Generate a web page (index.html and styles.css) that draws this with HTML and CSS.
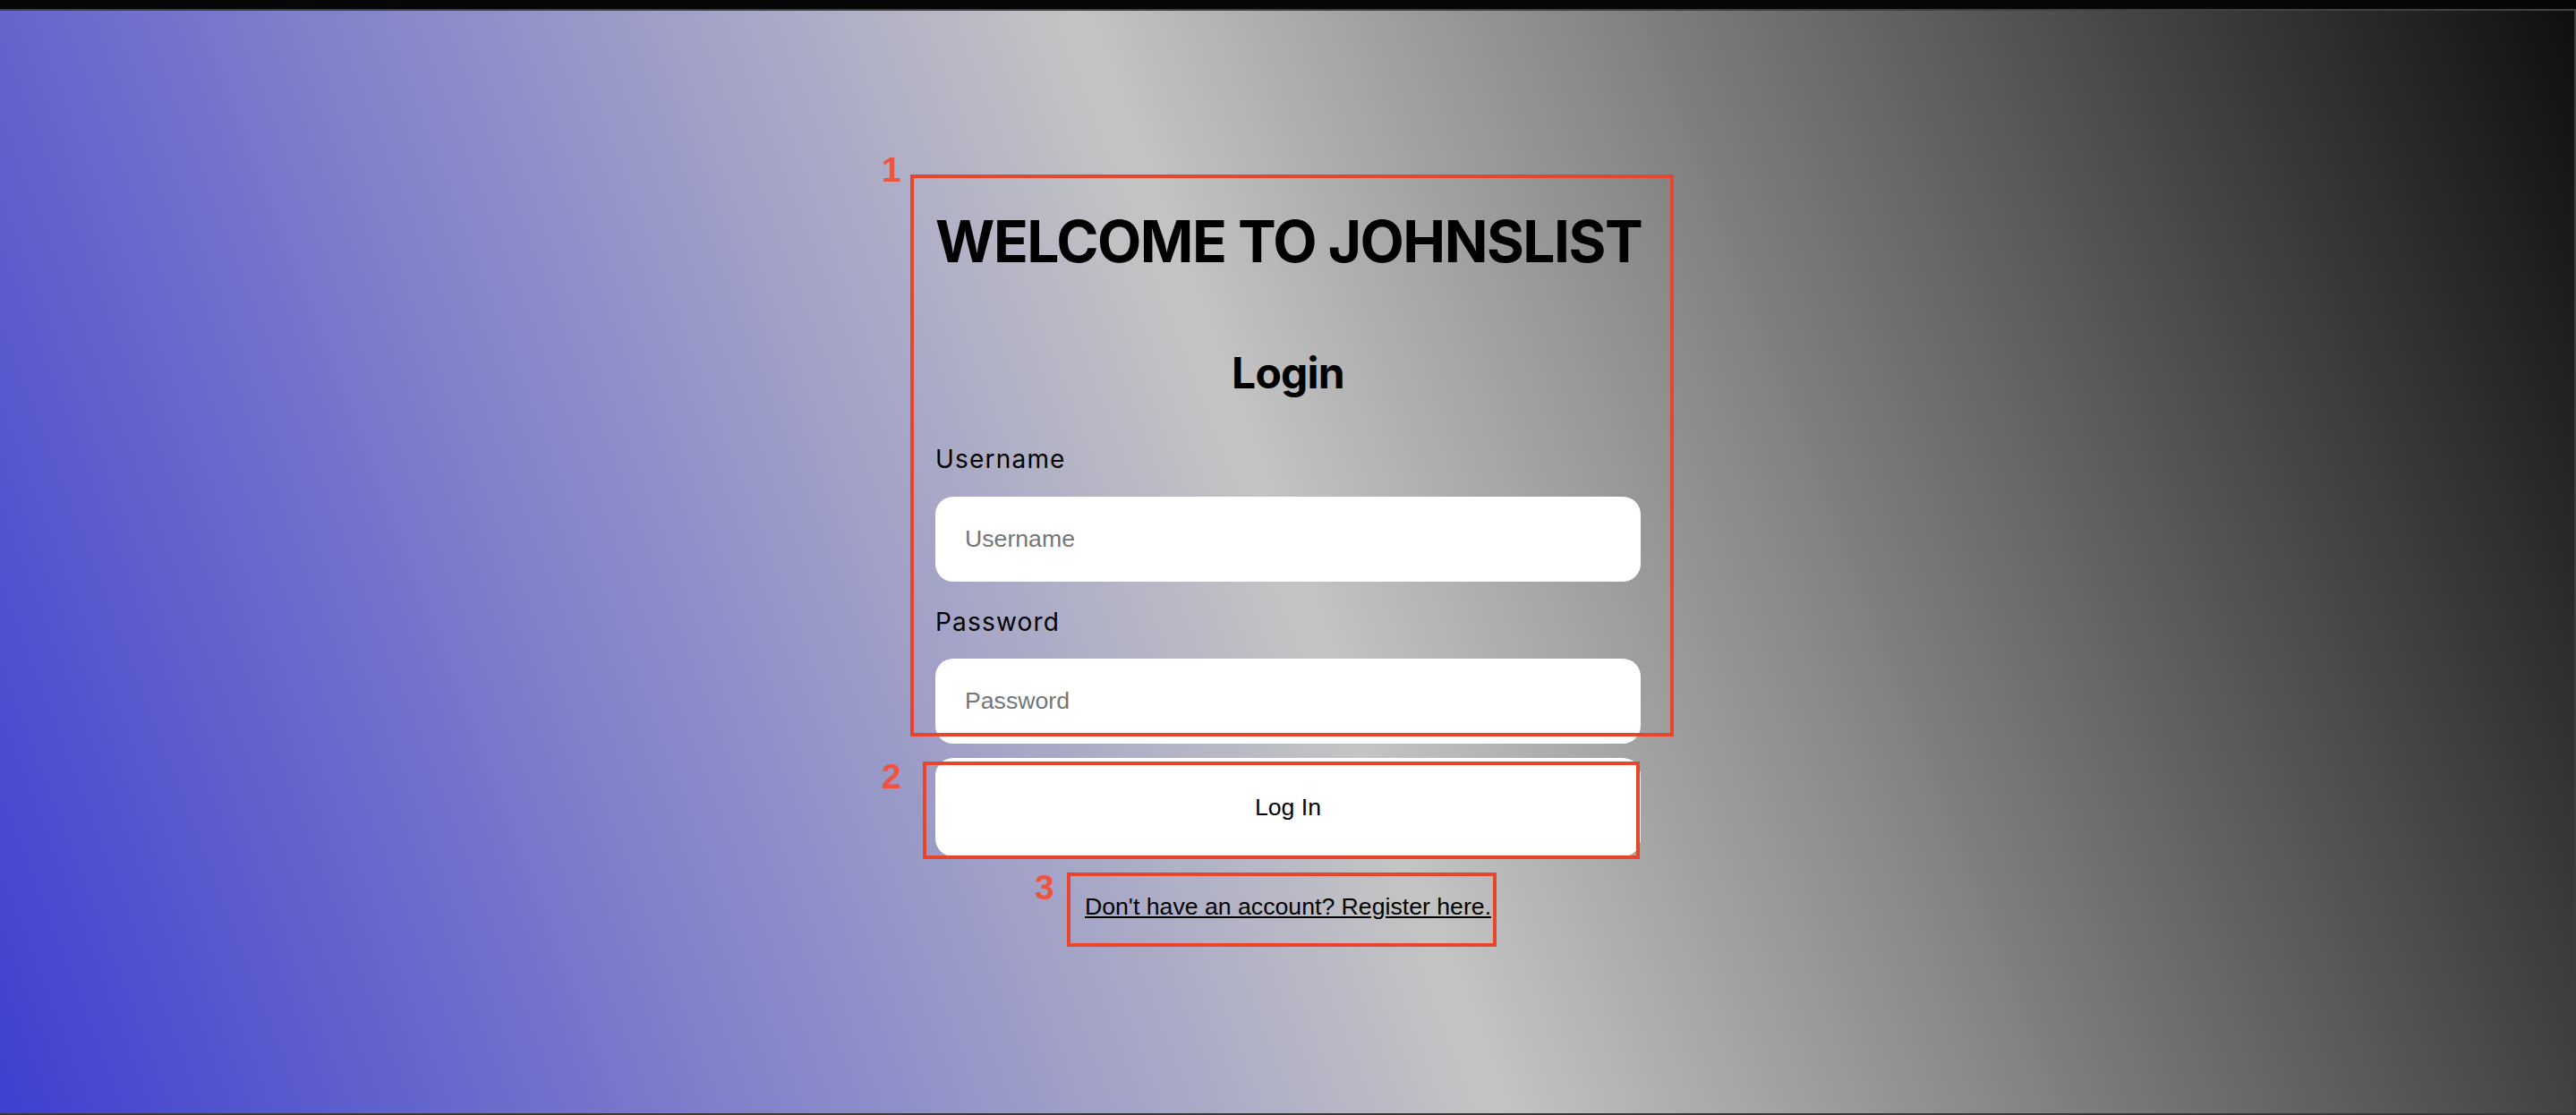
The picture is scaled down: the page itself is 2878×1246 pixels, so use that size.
FILE: index.html
```html
<!DOCTYPE html>
<html lang="en">
<head>
<meta charset="utf-8">
<title>Johnslist - Login</title>
<link rel="stylesheet" href="styles.css">
</head>
<body>
  <div class="topbar"></div>
  <main class="viewport">
    <section class="login">
      <h1 class="title">WELCOME TO JOHNSLIST</h1>
      <h2 class="subtitle">Login</h2>
      <form class="form">
        <label class="label" for="username">Username</label>
        <input class="field" id="username" type="text" placeholder="Username">
        <label class="label label-pw" for="password">Password</label>
        <input class="field" id="password" type="password" placeholder="Password">
        <button class="btn" type="button">Log In</button>
      </form>
      <a class="register" href="#">Don't have an account? Register here.</a>
    </section>
  </main>
  <div class="mark box1"></div>
  <div class="mark box2"></div>
  <div class="mark box3"></div>
  <span class="num num1">1</span>
  <span class="num num2">2</span>
  <span class="num num3">3</span>
</body>
</html>
```

FILE: styles.css
```css
html, body {
  margin: 0;
  padding: 0;
}
body {
  width: 2878px;
  height: 1246px;
  display: flex;
  flex-direction: column;
  background: #070707;
  overflow: hidden;
  position: relative;
}
.topbar {
  height: 10px;
  background: #070707;
  border-bottom: 2px solid #404040;
  flex: none;
}
.viewport {
  flex: 1;
  border-right: 2px solid #3e3e3e;
  border-bottom: 2px solid #3a3a3a;
  background: linear-gradient(69deg, #3f3fd1 0%, #c4c4c4 50%, #0f0f0f 100%);
  display: flex;
  justify-content: center;
}
.login {
  width: 788px;
  display: flex;
  flex-direction: column;
  margin-left: 2px;
}
.title {
  font-family: Inter, "Liberation Sans", sans-serif;
  font-weight: 700;
  font-size: 64px;
  line-height: 78px;
  letter-spacing: -1.5px;
  margin: 219px 0 0;
  color: #000;
  text-align: center;
  white-space: nowrap;
}
.subtitle {
  font-family: Inter, "Liberation Sans", sans-serif;
  font-weight: 700;
  font-size: 48px;
  line-height: 58px;
  letter-spacing: -0.8px;
  margin: 79px 0 0;
  color: #000;
  text-align: center;
}
.form {
  display: flex;
  flex-direction: column;
  margin: 0;
}
.label {
  font-family: Inter, "Liberation Sans", sans-serif;
  font-size: 28px;
  line-height: 34px;
  letter-spacing: 1.2px;
  color: #000;
  margin: 50px 0 25px;
}
.label-pw {
  margin: 28px 0 24px;
}
.field {
  height: 95px;
  box-sizing: border-box;
  border: none;
  border-radius: 20px;
  background: #fff;
  padding: 0 33px;
  font-family: "Liberation Sans", Arial, sans-serif;
  font-size: 26.67px;
  color: #000;
  outline: none;
}
.field::placeholder {
  color: #757575;
}
.btn {
  margin-top: 16px;
  height: 110px;
  border: none;
  border-radius: 20px;
  background: #fff;
  font-family: "Liberation Sans", Arial, sans-serif;
  font-size: 26.67px;
  color: #000;
  cursor: pointer;
}
.register {
  align-self: center;
  margin-top: 41px;
  font-family: "Liberation Sans", Arial, sans-serif;
  font-size: 26.67px;
  line-height: 30px;
  color: #000;
  text-decoration: underline;
}
.mark {
  position: absolute;
  box-sizing: border-box;
  border: 4px solid #e9442c;
  pointer-events: none;
}
.box1 { left: 1017px; top: 195px; width: 853px; height: 628px; }
.box2 { left: 1031px; top: 851px; width: 801px; height: 109px; }
.box3 { left: 1192px; top: 975px; width: 480px; height: 83px; }
.num {
  position: absolute;
  font-family: "Liberation Sans", Arial, sans-serif;
  font-weight: 700;
  font-size: 39px;
  line-height: 1;
  color: #ee5540;
}
.num1 { left: 985px; top: 170px; }
.num2 { left: 985px; top: 848px; }
.num3 { left: 1156px; top: 972px; }
```
